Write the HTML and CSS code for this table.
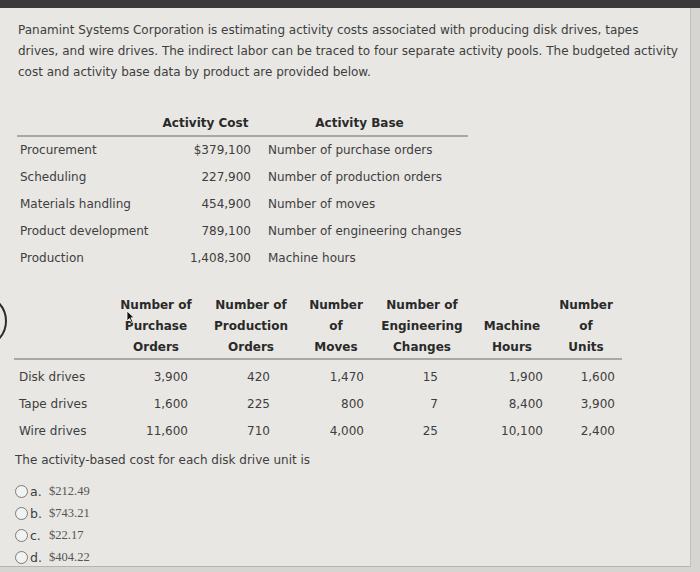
FILE: index.html
```html
<!DOCTYPE html>
<html>
<head>
<meta charset="utf-8">
<link rel="stylesheet" href="styles.css">
</head>
<body>
<div class="topbar"></div>
<div class="panel">
  <div class="ring"></div>
  <svg class="cursor" width="9" height="13" viewBox="0 0 9 13"><path d="M1 1 L1 11 L3.5 8.5 L5.5 12.5 L7 11.8 L5 7.8 L8.2 7.8 Z" fill="#111" stroke="#fff" stroke-width="0.8"/></svg>
  <p class="intro">Panamint Systems Corporation is estimating activity costs associated with producing disk drives, tapes<br>drives, and wire drives. The indirect labor can be traced to four separate activity pools. The budgeted activity<br>cost and activity base data by product are provided below.</p>

  <div class="cost-table">
    <div class="th"></div>
    <div class="th center">Activity Cost</div>
    <div class="th center">Activity Base</div>

    <div class="td">Procurement</div><div class="td num">$379,100</div><div class="td">Number of purchase orders</div>
    <div class="td">Scheduling</div><div class="td num">227,900</div><div class="td">Number of production orders</div>
    <div class="td">Materials handling</div><div class="td num">454,900</div><div class="td">Number of moves</div>
    <div class="td">Product development</div><div class="td num">789,100</div><div class="td">Number of engineering changes</div>
    <div class="td">Production</div><div class="td num">1,408,300</div><div class="td">Machine hours</div>
  </div>

  <div class="base-table">
    <div class="hd"></div>
    <div class="hd">Number of<br>Purchase<br>Orders</div>
    <div class="hd">Number of<br>Production<br>Orders</div>
    <div class="hd">Number<br>of<br>Moves</div>
    <div class="hd">Number of<br>Engineering<br>Changes</div>
    <div class="hd">Machine<br>Hours</div>
    <div class="hd">Number<br>of<br>Units</div>

    <div class="dl first">Disk drives</div><div class="dv c1 first">3,900</div><div class="dv c2 first">420</div><div class="dv c3 first">1,470</div><div class="dv c4 first">15</div><div class="dv c5 first">1,900</div><div class="dv c6 first">1,600</div>
    <div class="dl">Tape drives</div><div class="dv c1">1,600</div><div class="dv c2">225</div><div class="dv c3">800</div><div class="dv c4">7</div><div class="dv c5">8,400</div><div class="dv c6">3,900</div>
    <div class="dl">Wire drives</div><div class="dv c1">11,600</div><div class="dv c2">710</div><div class="dv c3">4,000</div><div class="dv c4">25</div><div class="dv c5">10,100</div><div class="dv c6">2,400</div>
  </div>

  <p class="question">The activity-based cost for each disk drive unit is</p>
  <ul class="options">
    <li><span class="radio"></span><span class="letter">a.</span><span class="val">$212.49</span></li>
    <li><span class="radio"></span><span class="letter">b.</span><span class="val">$743.21</span></li>
    <li><span class="radio"></span><span class="letter">c.</span><span class="val">$22.17</span></li>
    <li><span class="radio"></span><span class="letter">d.</span><span class="val">$404.22</span></li>
  </ul>
</div>
</body>
</html>
```
FILE: styles.css
```css
html, body {
  margin: 0;
  padding: 0;
}
body {
  width: 700px;
  height: 572px;
  overflow: hidden;
  background: #d6d5d2;
  font-family: "DejaVu Sans", Verdana, sans-serif;
  font-size: 12px;
  color: #3e3e3e;
}
.topbar {
  height: 8px;
  background: #3a3a3a;
}
.panel {
  position: relative;
  width: 690px;
  height: 558px;
  background: #e8e7e4;
  border-right: 1px solid #c2c1be;
  border-bottom: 1px solid #b5b4b1;
  overflow: hidden;
}
.ring {
  position: absolute;
  left: -47px;
  top: 286px;
  width: 50px;
  height: 50px;
  border: 2.5px solid #2c2c2c;
  border-radius: 50%;
}
.cursor {
  position: absolute;
  left: 126px;
  top: 302px;
}
.intro {
  margin: 12px 0 0 18px;
  width: 672px;
  line-height: 21px;
  white-space: nowrap;
}
.cost-table {
  display: grid;
  grid-template-columns: 143px 91px 217px;
  margin: 30px 0 0 17px;
  width: 451px;
}
.th {
  font-weight: bold;
  color: #2a2a2a;
  line-height: 21px;
  padding-bottom: 1px;
  border-bottom: 2px solid #a9a8a5;
}
.th.center {
  text-align: center;
}
.th:last-child {
  padding-left: 17px;
}
.td {
  line-height: 27px;
  white-space: nowrap;
}
.cost-table .td:nth-child(3n+1) {
  padding-left: 3px;
}
.cost-table .td:nth-child(3n) {
  padding-left: 17px;
}
.td.num {
  text-align: right;
}
.base-table {
  display: grid;
  grid-template-columns: 98px 88px 102px 68px 104px 76px 72px;
  margin: 23px 0 0 14px;
  width: 608px;
}
.hd {
  font-weight: bold;
  color: #2a2a2a;
  text-align: center;
  line-height: 21px;
  padding-bottom: 0;
  border-bottom: 2px solid #a9a8a5;
  display: flex;
  flex-direction: column;
  justify-content: flex-end;
  white-space: nowrap;
}
.dl {
  line-height: 27px;
  padding-left: 5px;
  white-space: nowrap;
}
.dv {
  line-height: 27px;
  text-align: right;
}
.first {
  padding-top: 4px;
}
.c1 { padding-right: 12px; }
.c2 { padding-right: 32px; }
.c3 { padding-right: 6px; }
.c4 { padding-right: 36px; }
.c5 { padding-right: 7px; }
.c6 { padding-right: 7px; }
.question {
  margin: 5px 0 0 15px;
  line-height: 21px;
}
.options {
  list-style: none;
  margin: 9px 0 0 15px;
  padding: 0;
}
.options li {
  display: flex;
  align-items: center;
  height: 22px;
}
.radio {
  width: 11px;
  height: 11px;
  border: 1px solid #7a7a7a;
  border-radius: 50%;
  background: #f2f2f0;
  box-sizing: content-box;
}
.letter {
  margin-left: 2px;
  width: 19px;
  font-size: 12.5px;
}
.val {
  font-family: "Liberation Serif", "Times New Roman", serif;
  font-size: 12.5px;
  color: #555;
}
```
